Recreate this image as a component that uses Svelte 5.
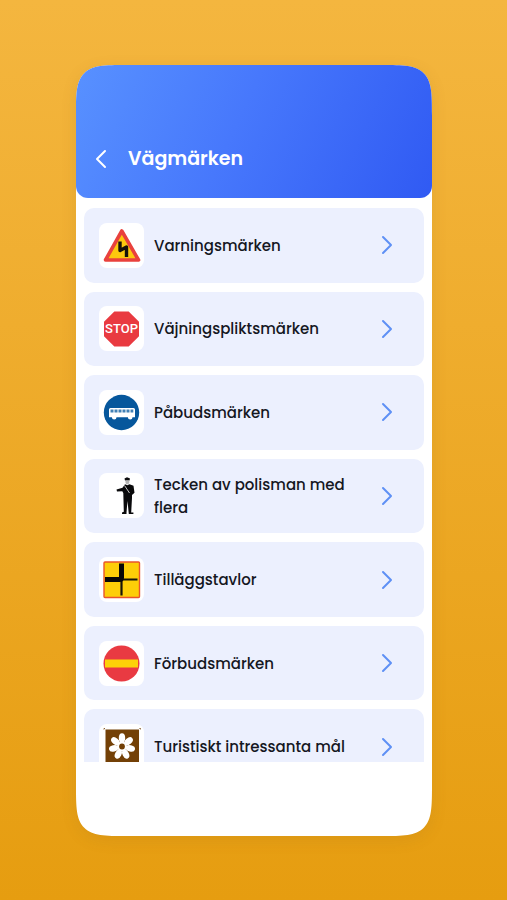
<div class="stage">
    <main class="phone">
        <header class="header">
            <button class="back" type="button" aria-label="Tillbaka">
                <svg width="12" height="20" viewBox="0 0 12 20">
                    <path d="M10 2L2 10l8 8" />
                </svg>
            </button>
            <h1 class="title">Vägmärken</h1>
        </header>

        <div class="scroller">
            <ul class="list">
            {#each categories as { name, sign } (sign)}
                <li class="item">
                    <button class="row" type="button">
                        <span class="thumb">
                            <svg width="45" height="45" viewBox="0 0 45 45" aria-hidden="true">
                            {#if sign === "warning"}
                                <path d="M22.800 8L39.500 37H6.500z" fill="#fdc80e" stroke="#e9413d" stroke-width="3.600" stroke-linejoin="round" />
                                <path d="M21 18.500v9l6.500-3.500v10" fill="none" stroke="#17120a" stroke-width="3.400" stroke-linejoin="round" />
                            {:else if sign === "stop"}
                                <path d="M15.300 5.500h14.400L40 15.800v14.400L29.700 40.500H15.300L5 30.200V15.800z" fill="#e93a40" />
                                <text class="stop" x="22.500" y="27" text-anchor="middle">STOP</text>
                            {:else if sign === "bus"}
                                <circle cx="22.500" cy="22.500" r="17.700" fill="#06579c" />
                                <path d="M11.500 18h23q1.500 0 1.500 1.500v7.700h-2.500a2.300 2.300 0 0 1-4.600 0H17.500a2.300 2.300 0 0 1-4.600 0H10V19.500q0-1.500 1.500-1.500z" fill="#fff" />
                                <path d="M11.500 19.500h3v3h-3zM15.500 19.500h3v3h-3zM19.500 19.500h3v3h-3zM23.500 19.500h3v3h-3zM27.500 19.500h3v3h-3zM31.500 19.500h2.800v3h-2.800z" fill="#4180b5" />
                            {:else if sign === "police"}
                                <path d="M25.500 5.500l2.500-1.200 3 1.200-.5 2h-4.500z" fill="#0b0b0d" />
                                <path d="M26.500 7.500h3.800v2.200l-1 1.600h-2l-.8-1.600z" fill="#b5b5b5" />
                                <path d="M26 11.300l2.300 1 2.200-1 4 1.400 1 7-2.500 2.300v3l-.8 14.500h2.200v1.400h-4.600L28.500 28l-1 11.400v1.500H23v-1.400l1.800-.8L24.300 20l-1-1.800-5.300.2-.5-2 6-1.600z" fill="#09090b" />
                                <path d="M25.500 12.500l5 7.500" fill="none" stroke="#d5d5d5" stroke-width=".9" />
                            {:else if sign === "priority"}
                                <rect x="5" y="5" width="35.500" height="35.500" rx="1" fill="#fdce08" stroke="#e9552c" stroke-width="1.400" />
                                <path d="M22.500 22.500V38.500M22.500 22.500H38.500" stroke="#17140a" stroke-width="2.200" />
                                <path d="M22.500 6.500V20.500q0 2-2 2H6" fill="none" stroke="#080808" stroke-width="5" />
                            {:else if sign === "forbidden"}
                                <circle cx="22.500" cy="22.500" r="18" fill="#e93a42" />
                                <path d="M6 18.500h33v8H6z" fill="#fdd208" />
                            {:else}
                                <path d="M6.500 5.500h33.500V45H6.500z" fill="#734006" />
                                <path d="M4.500 5l1.500-.5M42 5l-1.500-.5" stroke="#734006" />
                                <g fill="#fff">
                                {#each petals as angle (angle)}
                                    <ellipse cx="23" cy="14" rx="3.200" ry="4.800" transform="rotate({angle} 23 22.500)" />
                                {/each}
                                </g>
                                <circle cx="23" cy="22.500" r="5" fill="#fff" />
                                <circle cx="23" cy="22.500" r="2.900" fill="#734006" />
                            {/if}
                            </svg>
                        </span>
                        <span class="name">{name}</span>
                        <svg class="chevron" width="12" height="20" viewBox="0 0 12 20" aria-hidden="true">
                            <path d="M2 2l8 8-8 8" />
                        </svg>
                    </button>
                </li>
            {/each}
            </ul>
        </div>
    </main>
</div>

<script>
const petals = [ 0, 51, 103, 154, 206, 257, 309 ];

const categories = [
    { name : "Varningsmärken", sign : "warning" },
    { name : "Väjningspliktsmärken", sign : "stop" },
    { name : "Påbudsmärken", sign : "bus" },
    { name : "Tecken av polisman med flera", sign : "police" },
    { name : "Tilläggstavlor", sign : "priority" },
    { name : "Förbudsmärken", sign : "forbidden" },
    { name : "Turistiskt intressanta mål", sign : "tourist" },
];
</script>

<style>
    .stage {
        box-sizing: border-box;
        display: flex;
        height: 100vh;
        padding: 65px 75px 64px 76px;

        background: linear-gradient(#F4B63F, #E69D10);
        font-family: Poppins, Inter, "Open Sans", sans-serif;
    }

    .phone {
        display: flex;
        flex-flow: column nowrap;
        flex: 1;
        overflow: hidden;
        box-sizing: border-box;
        padding-bottom: 74px;

        background: #FFF;
        border-radius: 32px;
        box-shadow: 0 4px 16px rgba(120, 90, 30, 0.12);
    }

    @supports (corner-shape: squircle) {
        .phone {
            border-radius: 52px;
            corner-shape: squircle;
        }
    }

    .header {
        display: flex;
        align-items: center;
        gap: 21px;
        padding: 78px 19px 23px;

        background: linear-gradient(115deg, #5891FF, #4778FC 45%, #305AF3);
        border-radius: 0 0 12px 12px;
        color: #FFF;
    }

    .back {
        display: flex;
        padding: 0;

        background: none;
        border: 0;
        color: inherit;
        cursor: pointer;
    }

    .back path,
    .chevron path {
        fill: none;
        stroke: currentColor;
        stroke-width: 2;
        stroke-linecap: round;
        stroke-linejoin: round;
    }

    .title {
        margin: 0;

        font-size: 19px;
        font-weight: 600;
        line-height: 32px;
    }

    .scroller {
        flex: 1;
        min-height: 0;
        margin-top: 10px;
        overflow-y: auto;
        scrollbar-width: none;
    }

    .list {
        display: grid;
        grid-auto-rows: 1fr;
        gap: 9px;
        min-height: 576px;
        margin: 0;
        padding: 0 8px;

        list-style: none;
    }

    .row {
        display: flex;
        align-items: center;
        width: 100%;
        height: 100%;
        padding: 0 31px 0 15px;

        background: #ECF0FE;
        border: 0;
        border-radius: 10px;
        color: #15171F;
        cursor: pointer;
        font-family: inherit;
        text-align: left;
    }

    .item {
        display: flex;
    }

    .thumb {
        display: flex;
        flex: none;
        overflow: hidden;

        background: #FFF;
        border-radius: 8px;
    }

    .stop {
        fill: #FFF;
        font-family: Roboto, "Liberation Sans", sans-serif;
        font-size: 13px;
        font-weight: 500;
    }

    .name {
        flex: 1;
        padding: 0 16px 0 10px;

        font-size: 15px;
        font-weight: 500;
        line-height: 23px;
    }

    .chevron {
        flex: none;

        color: #5E90F5;
    }
</style>
